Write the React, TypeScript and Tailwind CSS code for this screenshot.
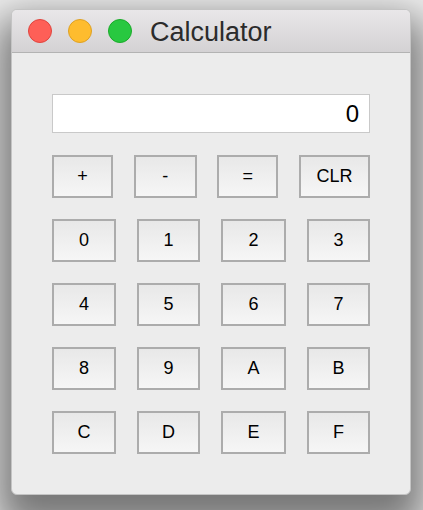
import React from "react";

const rows: { label: string; w: string }[][] = [
  [
    { label: "+", w: "w-[61px]" },
    { label: "-", w: "w-[63px]" },
    { label: "=", w: "w-[61px]" },
    { label: "CLR", w: "w-[71px]" },
  ],
  [
    { label: "0", w: "w-[64px]" },
    { label: "1", w: "w-[63px]" },
    { label: "2", w: "w-[65px]" },
    { label: "3", w: "w-[63px]" },
  ],
  [
    { label: "4", w: "w-[64px]" },
    { label: "5", w: "w-[63px]" },
    { label: "6", w: "w-[65px]" },
    { label: "7", w: "w-[63px]" },
  ],
  [
    { label: "8", w: "w-[64px]" },
    { label: "9", w: "w-[63px]" },
    { label: "A", w: "w-[65px]" },
    { label: "B", w: "w-[63px]" },
  ],
  [
    { label: "C", w: "w-[64px]" },
    { label: "D", w: "w-[63px]" },
    { label: "E", w: "w-[65px]" },
    { label: "F", w: "w-[63px]" },
  ],
];

const App: React.FC = () => {
  return (
    <div
      className="w-[423px] h-[510px] bg-[#efefef] pt-[9px] pl-[11px] overflow-hidden"
      style={{ fontFamily: '"Liberation Sans", Arial, sans-serif' }}
    >
      <div className="w-[400px] h-[486px] rounded-[6px] bg-[#ececec] flex flex-col overflow-hidden shadow-[0_22px_40px_14px_rgba(0,0,0,0.5)] border border-[#c4c4c4]">
        {/* title bar */}
        <div className="h-[43px] shrink-0 flex items-center pl-[16px] bg-gradient-to-b from-[#e9e7e9] to-[#d4d2d4] border-b border-[#b3b3b3]">
          <div className="w-[24px] h-[24px] rounded-full bg-[#fe5f57] border border-[#e0443e]" />
          <div className="w-[24px] h-[24px] rounded-full bg-[#febc2e] border border-[#dea123] ml-[16px]" />
          <div className="w-[24px] h-[24px] rounded-full bg-[#28c840] border border-[#1aab29] ml-[16px]" />
          <span className="ml-[18px] mt-[2px] text-[27px] text-[#2b2b2b] leading-none">Calculator</span>
        </div>

        {/* body */}
        <div className="flex-1 px-[40px] pt-[41px]">
          <div className="h-[39px] bg-white border border-[#c9c9c9] flex items-center justify-end pr-[10px] text-[24px] text-black">
            0
          </div>
          <div className="mt-[22px] flex flex-col gap-[21px]">
            {rows.map((row, i) => (
              <div key={i} className="flex justify-between">
                {row.map((b) => (
                  <button
                    key={b.label}
                    className={`${b.w} h-[43px] border-2 border-[#acacac] bg-gradient-to-b from-[#e8e8e8] to-[#f6f6f6] text-[18px] text-black flex items-center justify-center`}
                  >
                    {b.label}
                  </button>
                ))}
              </div>
            ))}
          </div>
        </div>
      </div>
    </div>
  );
};

export default App;
